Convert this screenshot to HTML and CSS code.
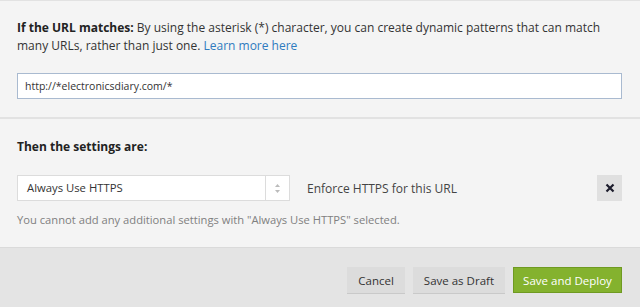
FILE: index.html
```html
<!DOCTYPE html>
<html lang="en">
<head>
  <meta charset="UTF-8" />
  <title>Page Rule</title>
  <link rel="stylesheet" href="styles.css">
</head>
<body>
  <div class="rule">
    <!-- URL match -->
    <section class="block match">
      <p class="intro"><strong>If the URL matches:</strong> By using the asterisk (*) character, you can create dynamic patterns that can match many URLs, rather than just one. <a href="#">Learn more here</a></p>
      <input class="url" type="text" value="http://*electronicsdiary.com/*">
    </section>

    <!-- Settings -->
    <section class="block settings">
      <h3>Then the settings are:</h3>
      <div class="setting-row">
        <div class="select">
          <span class="select-value">Always Use HTTPS</span>
          <span class="select-arrow">
            <svg width="7" height="11" viewBox="0 0 7 11"><path d="M3.5 1 L6 4 H1 Z" fill="#bbb"/><path d="M3.5 10 L6 7 H1 Z" fill="#bbb"/></svg>
          </span>
        </div>
        <span class="setting-desc">Enforce HTTPS for this URL</span>
        <button class="remove" type="button" aria-label="Remove">
          <svg width="10" height="10" viewBox="0 0 10 10"><path d="M1.5 1.5 L8.5 8.5 M8.5 1.5 L1.5 8.5" stroke="#1c1c2c" stroke-width="2.2"/></svg>
        </button>
      </div>
      <p class="note">You cannot add any additional settings with "Always Use HTTPS" selected.</p>
    </section>

    <!-- Actions -->
    <footer class="actions">
      <button class="btn" type="button">Cancel</button>
      <button class="btn" type="button">Save as Draft</button>
      <button class="btn btn-primary" type="button">Save and Deploy</button>
    </footer>
  </div>
</body>
</html>
```

FILE: styles.css
```css
/* BASE */
* {
  margin: 0;
  padding: 0;
  box-sizing: border-box;
}
body {
  font-family: "Open Sans", Arial, sans-serif;
  font-size: 12px;
  color: #333;
  background: #f4f4f4;
  width: 640px;
  height: 307px;
  overflow: hidden;
}
.rule {
  border-top: 1px solid #e2e2e2;
}
/* BLOCKS */
.block {
  padding: 0 18px 0 17px;
}
.match {
  padding-top: 18px;
  height: 118px;
  border-bottom: 2px solid #e2e2e2;
}
.intro {
  font-size: 12px;
  line-height: 18px;
  color: #333;
}
.intro strong {
  font-weight: bold;
  color: #222;
}
.intro a {
  color: #2f7bbf;
  text-decoration: none;
}
.url {
  display: block;
  margin-top: 18px;
  width: 605px;
  height: 26px;
  padding: 0 7px;
  border: 1px solid #a9bad0;
  background: #fff;
  font-family: "Open Sans", Arial, sans-serif;
  font-size: 10.5px;
  color: #333;
  outline: none;
}
/* SETTINGS */
.settings {
  padding-top: 19px;
  height: 128px;
}
.settings h3 {
  font-size: 12px;
  font-weight: bold;
  color: #222;
  line-height: 18px;
}
.setting-row {
  display: flex;
  align-items: center;
  margin-top: 19px;
  width: 605px;
}
.select {
  display: flex;
  width: 273px;
  height: 26px;
  background: #fff;
  border: 1px solid #dcdcdc;
}
.select-value {
  flex: 1;
  padding-left: 9px;
  line-height: 24px;
  font-size: 11.3px;
  color: #333;
}
.select-arrow {
  width: 24px;
  border-left: 1px solid #dcdcdc;
  display: flex;
  align-items: center;
  justify-content: center;
}
.setting-desc {
  margin-left: 17px;
  flex: 1;
  font-size: 12px;
  color: #444;
}
.remove {
  width: 25px;
  height: 26px;
  border: none;
  background: #e0e0e0;
  display: flex;
  align-items: center;
  justify-content: center;
  cursor: pointer;
}
.note {
  margin-top: 11px;
  font-size: 11.2px;
  color: #808080;
}
/* ACTIONS */
.actions {
  background: #e4e4e4;
  border-top: 1px solid #dadada;
  height: 61px;
  display: flex;
  justify-content: flex-end;
  align-items: flex-start;
  gap: 8px;
  padding: 19px 18px 0 0;
}
.btn {
  height: 26px;
  padding: 0 11px;
  border: none;
  box-shadow: 0 1px 0 #c9c9c9;
  background: #dcdcdc;
  font-family: "Open Sans", Arial, sans-serif;
  font-size: 11.5px;
  color: #333;
  cursor: pointer;
}
.btn-primary {
  width: 109px;
  padding: 0;
  background: #84b22e;
  border: 1px solid #6f9a22;
  box-shadow: none;
  color: #fff;
}
```
